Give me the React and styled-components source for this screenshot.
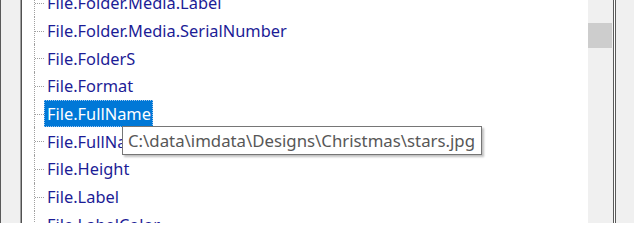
import React from 'react';
import styled, { createGlobalStyle } from 'styled-components';

const GlobalStyle = createGlobalStyle`
  html, body {
    margin: 0;
    padding: 0;
    background: #ffffff;
    overflow: hidden;
  }
`;

const Frame = styled.div`
  display: flex;
  width: 634px;
  height: 223px;
  overflow: hidden;
  font-family: 'Noto Sans', 'Open Sans', sans-serif;
`;

const Gutter = styled.div`
  width: 19px;
  flex-shrink: 0;
  background: #f0f0f0;
  border-left: 1px solid #5a5a5a;
  border-right: 1px solid #a0a0a0;
`;

const RightGutter = styled.div`
  width: 20px;
  flex-shrink: 0;
  background: #f0f0f0;
  border-left: 1px solid #5a5a5a;
  box-shadow: inset 1px 0 0 #ffffff, inset 2px 0 0 #5a5a5a;
`;

const ListPane = styled.div`
  position: relative;
  flex: 1;
  min-width: 0;
  background: #ffffff;
  border-left: 1px solid #505050;
  margin-top: -11px;
`;

const Row = styled.div`
  position: relative;
  display: flex;
  align-items: center;
  height: 27.7px;
  padding-left: 22px;

  &::before {
    content: '';
    position: absolute;
    left: 12px;
    top: 0;
    bottom: 0;
    border-left: 1px dotted #a0a0a0;
  }

  &::after {
    content: '';
    position: absolute;
    left: 13px;
    width: 9px;
    top: 50%;
    border-top: 1px dotted #a0a0a0;
  }
`;

const Label = styled.span`
  display: flex;
  align-items: center;
  height: 27px;
  padding: 0 2px 0 3px;
  font-size: 16.4px;
  color: ${(props) => (props.selected ? '#ffffff' : '#1c1c96')};
  background: ${(props) => (props.selected ? '#0078d7' : 'transparent')};
  outline: ${(props) => (props.selected ? '1px dotted #9fc7ee' : 'none')};
  outline-offset: -1px;
  white-space: nowrap;
`;

const Scrollbar = styled.div`
  width: 25px;
  flex-shrink: 0;
  background: #f0f0f0;
  padding-top: 23px;
`;

const Thumb = styled.div`
  width: 24px;
  height: 25px;
  background: #cdcdcd;
`;

const Tooltip = styled.div`
  position: absolute;
  left: 100px;
  top: 137px;
  height: 27px;
  display: flex;
  align-items: center;
  padding: 0 6px 0 5px;
  background: #ffffff;
  border: 1px solid #767676;
  box-shadow: 2px 2px 2px rgba(0, 0, 0, 0.25);
  font-size: 16.8px;
  color: #575757;
  white-space: nowrap;
`;

const items = [
  'File.Folder.Media.Label',
  'File.Folder.Media.SerialNumber',
  'File.FolderS',
  'File.Format',
  'File.FullName',
  'File.FullNameNoExt',
  'File.Height',
  'File.Label',
  'File.LabelColor',
];

export default function App() {
  return (
    <>
      <GlobalStyle />
      <Frame>
        <Gutter />
        <ListPane>
          {items.map((item, i) => (
            <Row key={item}>
              <Label selected={i === 4}>{item}</Label>
            </Row>
          ))}
          <Tooltip>C:\data\imdata\Designs\Christmas\stars.jpg</Tooltip>
        </ListPane>
        <Scrollbar>
          <Thumb />
        </Scrollbar>
        <RightGutter />
      </Frame>
    </>
  );
}
